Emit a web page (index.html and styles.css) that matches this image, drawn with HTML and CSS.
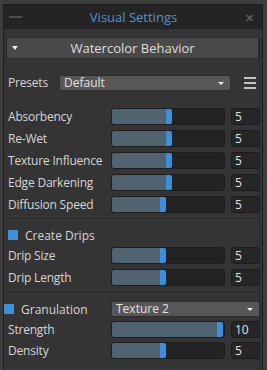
FILE: index.html
```html
<!DOCTYPE html>
<html lang="en">

<head>
  <meta charset="UTF-8">
  <meta name="viewport" content="width=device-width, initial-scale=1.0">
  <title>Visual Settings</title>
  <link rel="stylesheet" href="styles.css">
</head>

<body>
  <div class="window">
    <div class="titlebar">
      <span class="min"></span>
      <span class="title">Visual Settings</span>
      <span class="close">✕</span>
    </div>

    <div class="panel">
      <div class="section-head"><span class="caret"></span>Watercolor Behavior</div>

      <div class="presets">
        <span class="label">Presets</span>
        <div class="select">Default<span class="arrow"></span></div>
        <span class="menu"><i></i><i></i><i></i></span>
      </div>

      <div class="grid">
        <span class="label">Absorbency</span>
        <div class="slider"><div class="fill" style="width: 54%"></div></div>
        <div class="value">5</div>

        <span class="label">Re-Wet</span>
        <div class="slider"><div class="fill" style="width: 54%"></div></div>
        <div class="value">5</div>

        <span class="label">Texture Influence</span>
        <div class="slider"><div class="fill" style="width: 54%"></div></div>
        <div class="value">5</div>

        <span class="label">Edge Darkening</span>
        <div class="slider"><div class="fill" style="width: 54%"></div></div>
        <div class="value">5</div>

        <span class="label">Diffusion Speed</span>
        <div class="slider"><div class="fill" style="width: 48%"></div></div>
        <div class="value">5</div>
      </div>

      <hr class="sep">

      <div class="check"><span class="box"></span>Create Drips</div>

      <div class="grid drips">
        <span class="label">Drip Size</span>
        <div class="slider"><div class="fill" style="width: 48%"></div></div>
        <div class="value">5</div>

        <span class="label">Drip Length</span>
        <div class="slider"><div class="fill" style="width: 48%"></div></div>
        <div class="value">5</div>
      </div>

      <hr class="sep sep-2">

      <div class="grid gran">
        <div class="check check-gran"><span class="box"></span>Granulation</div>
        <div class="select select-wide">Texture 2<span class="arrow"></span></div>

        <span class="label">Strength</span>
        <div class="slider"><div class="fill" style="width: 99%"></div></div>
        <div class="value">10</div>

        <span class="label">Density</span>
        <div class="slider"><div class="fill" style="width: 48%"></div></div>
        <div class="value">5</div>
      </div>
    </div>
  </div>
</body>

</html>
```

FILE: styles.css
```css
body {
  margin: 0;
  background: #3d3d3d;
  font-family: 'Open Sans', 'Noto Sans', sans-serif;
  font-size: 12px;
  color: #d6d6d6;
}

.window {
  margin: 4px 0 0 3px;
  width: 258px;
  height: 370px;
  border: 1px solid #1c1c1c;
  border-bottom: none;
  background: #343434;
}

.titlebar {
  height: 24px;
  background: #242424;
  display: flex;
  align-items: center;
  padding: 0 8px 0 5px;
}

.min {
  width: 13px;
  height: 2px;
  background: #4e4e4e;
}

.title {
  flex: 1;
  text-align: center;
  color: #4f94d4;
  font-size: 13px;
}

.close {
  color: #5c5c5c;
  font-size: 11px;
  font-weight: bold;
}

.panel {
  width: 255px;
  height: 346px;
  border-right: 1px solid #2a2a2a;
}

.section-head {
  margin: 8px 0 0 2px;
  height: 20px;
  border: 1px solid #2b2b2b;
  border-radius: 2px;
  background: #494949;
  text-align: center;
  line-height: 20px;
  font-size: 13px;
  color: #dedede;
  position: relative;
}

.caret {
  position: absolute;
  left: 5px;
  top: 8px;
  border-left: 3px solid transparent;
  border-right: 3px solid transparent;
  border-top: 4px solid #eee;
}

.label {
  white-space: nowrap;
  letter-spacing: -0.2px;
}

.presets {
  display: flex;
  align-items: center;
  margin-top: 15px;
  padding-left: 4px;
}

.presets .label {
  width: 51px;
}

.select {
  position: relative;
  height: 14px;
  line-height: 14px;
  border: 1px solid #2c2c2c;
  border-radius: 2px;
  background: #575757;
  padding-left: 4px;
  color: #e2e2e2;
}

.presets .select {
  width: 166px;
}

.arrow {
  position: absolute;
  right: 6px;
  top: 6px;
  border-left: 3px solid transparent;
  border-right: 3px solid transparent;
  border-top: 3px solid #eee;
}

.menu {
  margin-left: 13px;
  display: flex;
  flex-direction: column;
  gap: 3px;
}

.menu i {
  display: block;
  width: 12px;
  height: 2px;
  background: #c4c4c4;
}

.grid {
  display: grid;
  grid-template-columns: 97px 114px 29px;
  grid-auto-rows: 17px;
  column-gap: 6px;
  row-gap: 5px;
  margin-top: 17px;
  padding-left: 4px;
  align-items: center;
}

.slider {
  height: 15px;
  border: 1px solid #1d1d1d;
  border-radius: 3px;
  background: #232323;
  overflow: hidden;
}

.fill {
  box-sizing: border-box;
  height: 100%;
  background: #4f6470;
  border-right: 6px solid #3a8fdf;
  border-radius: 0 2px 2px 0;
}

.value {
  height: 15px;
  line-height: 15px;
  border: 1px solid #1d1d1d;
  border-radius: 3px;
  background: #262626;
  padding-left: 3px;
  color: #e0e0e0;
}

.sep {
  margin: 5px 0 0 0;
  border: none;
  border-top: 1px solid #262626;
  border-bottom: 1px solid #3b3b3b;
}

.sep-2 {
  margin-top: 6px;
}

.check {
  display: flex;
  align-items: center;
  margin-top: 8px;
  padding-left: 4px;
  height: 14px;
}

.box {
  width: 10px;
  height: 10px;
  background: #3d8fdb;
  margin-right: 7px;
}

.drips {
  margin-top: 5px;
}

.gran {
  margin-top: 7px;
  row-gap: 4px;
  grid-template-rows: 16px;
  padding-left: 0;
  grid-template-columns: 101px 114px 29px;
}

.gran .label {
  padding-left: 4px;
}

.check-gran {
  margin-top: 0;
  padding-left: 0;
}

.select-wide {
  grid-column: 2 / 4;
}
```
